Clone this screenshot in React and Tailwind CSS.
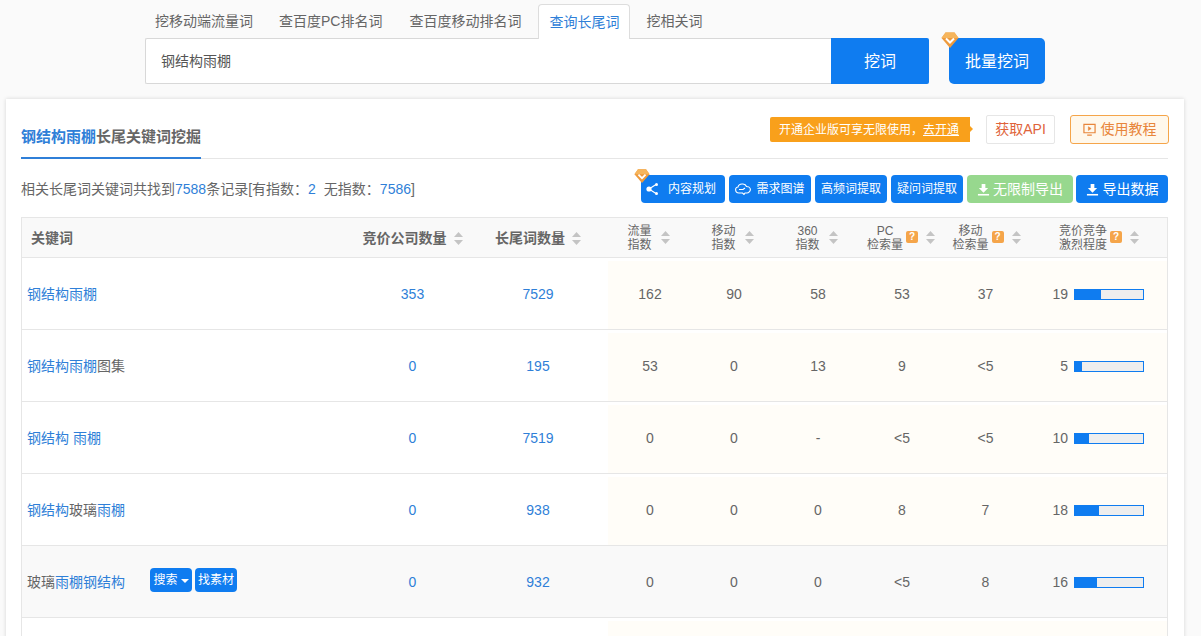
import React from "react";

const blue = "text-[#2f7fd8]";

const rows = [
  { kw: [["钢结构雨棚", 1]], a: "353", b: "7529", c: ["162", "90", "58", "53", "37"], n: 19 },
  { kw: [["钢结构雨棚", 1], ["图集", 0]], a: "0", b: "195", c: ["53", "0", "13", "9", "<5"], n: 5 },
  { kw: [["钢结构 雨棚", 1]], a: "0", b: "7519", c: ["0", "0", "-", "<5", "<5"], n: 10 },
  { kw: [["钢结构", 1], ["玻璃", 0], ["雨棚", 1]], a: "0", b: "938", c: ["0", "0", "0", "8", "7"], n: 18 },
  { kw: [["玻璃", 0], ["雨棚钢结构", 1]], a: "0", b: "932", c: ["0", "0", "0", "<5", "8"], n: 16, hover: true },
];

const Diamond = ({ className }) => (
  <svg viewBox="0 0 18 18" className={className}>
    <path d="M4.5 1.5h9L17.5 7 9 17 .5 7z" fill="#ee9a3c" />
    <path d="M4.5 1.5h9L17.5 7H.5z" fill="#f6b55c" />
    <path d="M5 7.5l4 4 4-4" fill="none" stroke="#fff" strokeWidth="2" />
  </svg>
);

const Sort = () => (
  <svg viewBox="0 0 9 13" className="h-[13px] w-[9px] shrink-0">
    <path d="M4.5 0L9 5H0z" fill="#c4c4c4" />
    <path d="M4.5 13L0 8h9z" fill="#c4c4c4" />
  </svg>
);

const Help = () => (
  <span className="flex h-[12px] w-[12px] shrink-0 items-center justify-center self-start mt-[13px] rounded-[2px] bg-[#f5a54a] text-[10px] font-bold leading-none text-white">
    ?
  </span>
);

const Download = ({ className }) => (
  <svg viewBox="0 0 14 14" className={className} fill="currentColor">
    <path d="M5 1h4v4.500h3L7 10.500 2 5.500h3z" />
    <path d="M1 11.800h12V13.500H1z" />
  </svg>
);

const TwoLine = ({ top, bottom }) => (
  <span className="mt-[1px] text-center text-[12px] leading-[14px]">
    {top}
    <br />
    {bottom}
  </span>
);

const Bar = ({ n }) => (
  <div className="flex items-center">
    <span className="w-[41px] text-right">{n}</span>
    <div className="ml-[6px] h-[11px] w-[70px] border border-[#0f7cf0] bg-[#eeeeee]">
      <div className="h-full bg-[#0f7cf0]" style={{ width: `${n * 2}%` }} />
    </div>
  </div>
);

const gridCols = "grid grid-cols-[328px_125px_133px_84px_84px_84px_84px_83px_1fr]";

const Row = ({ row }) => (
  <div className={`${gridCols} h-[72px] border-b border-[#e6e6e6] text-[14px] text-[#666] ${row.hover ? "bg-[#f9f9f9]" : ""}`}>
    <div className="flex items-center pl-[5px] pt-[2px]">
      <span className="w-[123px] whitespace-nowrap">
        {row.kw.map(([t, hl], i) => (
          <span key={i} className={hl ? blue : ""}>{t}</span>
        ))}
      </span>
      {row.hover && (
        <div className="mb-[5px] flex gap-[3px] text-[12px] text-white">
          <span className="flex h-[24px] w-[42px] items-center justify-center rounded-[4px] bg-[#0f7cf0]">
            搜索
            <span className="ml-[3px] mt-[2px] border-x-[4px] border-t-[4px] border-x-transparent border-t-white" />
          </span>
          <span className="flex h-[24px] w-[42px] items-center justify-center rounded-[4px] bg-[#0f7cf0]">找素材</span>
        </div>
      )}
    </div>
    <div className={`flex items-center justify-center pt-[2px] ${blue}`}>{row.a}</div>
    <div className={`flex items-center justify-center pr-[7px] pt-[2px] ${blue}`}>{row.b}</div>
    {row.c.map((v, i) => (
      <div key={i} className={`mt-[3px] flex items-center justify-center pb-[1px] ${row.hover ? "" : "bg-[#fffdf8]"}`}>{v}</div>
    ))}
    <div className={`mt-[3px] flex items-center pb-[1px] ${row.hover ? "" : "bg-[#fffdf8]"}`}>
      <Bar n={row.n} />
    </div>
  </div>
);

export default function App() {
  return (
    <div
      className="h-[636px] w-[1201px] overflow-hidden bg-[#fafafa] text-[14px] text-[#666]"
      style={{ fontFamily: '"Liberation Sans","Noto Sans CJK SC",sans-serif' }}
    >
      {/* tabs */}
      <div className="flex h-[38px] items-end pl-[144px] pt-[4px]">
        <div className="mr-[4px] flex h-[34px] items-center border border-transparent px-[10px] pt-[1px]">挖移动端流量词</div>
        <div className="mr-[5px] flex h-[34px] items-center border border-transparent px-[10px] pt-[1px]">查百度PC排名词</div>
        <div className="mr-[6px] flex h-[34px] items-center border border-transparent px-[10px] pt-[1px]">查百度移动排名词</div>
        <div className="relative z-10 mr-[5px] -mb-px flex h-[35px] items-center rounded-t-[4px] border border-b-0 border-[#dddddd] bg-white px-[10px] pt-[1px] text-[#2f7fd8]">查询长尾词</div>
        <div className="mr-[5px] flex h-[34px] items-center border border-transparent px-[10px] pt-[1px]">挖相关词</div>
      </div>

      {/* search */}
      <div className="flex pl-[145px]">
        <div className="flex h-[46px] w-[686px] items-center rounded-l-[2px] border border-r-0 border-[#d8d8d8] bg-white pl-[15px] text-[#555]">
          钢结构雨棚
        </div>
        <button className="h-[46px] w-[98px] rounded-r-[2px] bg-[#0f7cf0] pt-[1px] text-[16px] text-white">挖词</button>
        <button className="relative ml-[20px] h-[46px] w-[96px] rounded-[5px] bg-[#0f7cf0] pt-[1px] text-[16px] text-white">
          批量挖词
          <Diamond className="absolute -left-[8px] -top-[7px] h-[18px] w-[18px]" />
        </button>
      </div>

      {/* card */}
      <div className="ml-[6px] mt-[15px] h-[600px] w-[1178px] bg-white pl-[15px] pr-[16px] shadow-[0_0_4px_rgba(0,0,0,0.15)]">
        <div className="flex h-[60px] items-end justify-between border-b border-[#e6e6e6]">
          <div className="-mb-px h-[34px] w-[180px] whitespace-nowrap border-b-2 border-[#2f7fd8] pt-[2px] text-[15px] font-bold leading-[20px]">
            <span className={blue}>钢结构雨棚</span>长尾关键词挖掘
          </div>
          <div className="-mr-[1px] mb-[14px] flex items-center">
            <div className="relative mr-[16px] flex h-[25px] w-[200px] items-center rounded-l-[2px] bg-[#f9a01b] pl-[9px] text-[12px] text-white">
              开通企业版可享无限使用，<span className="underline">去开通</span>
              <span className="absolute -right-[3px] top-[7px] border-y-[5px] border-l-[5px] border-y-transparent border-l-[#f9a01b]" />
            </div>
            <div className="flex h-[29px] w-[69px] items-center justify-center rounded-[2px] border border-[#e6e6e6] text-[#e0633a]">获取API</div>
            <div className="ml-[15px] flex h-[29px] w-[99px] items-center justify-center gap-[5px] rounded-[3px] border border-[#f5a54a] bg-[#fff8ec] text-[#e8853a]">
              <svg viewBox="0 0 14 14" className="h-[13px] w-[13px]" fill="none" stroke="currentColor" strokeWidth="1.300">
                <path d="M1 1.500h12v9H1zM4.500 13h5" />
                <path d="M5.800 4l3 2-3 2z" fill="currentColor" strokeWidth="0.600" />
              </svg>
              使用教程
            </div>
          </div>
        </div>

        <div className="flex h-[58px] items-start justify-between pt-[16px]">
          <p className="mt-[4px] leading-[20px]">
            相关长尾词关键词共找到<span className={blue}>7588</span>条记录[有指数：<span className={blue}>2</span>
            <span className="ml-[8px]">无指数：</span>
            <span className={blue}>7586</span>]
          </p>
          <div className="flex text-white">
            <div className="relative flex h-[28px] w-[84px] items-center rounded-[4px] bg-[#0f7cf0] pl-[5px] text-[12px]">
              <Diamond className="absolute -left-[7px] -top-[7px] h-[16px] w-[16px]" />
              <svg viewBox="0 0 14 14" className="h-[14px] w-[14px]" fill="#fff">
                <path d="M3 7l7-4.500M3 7l7 4.500" stroke="#fff" strokeWidth="1.200" />
                <circle cx="3" cy="7" r="2.600" />
                <circle cx="10.500" cy="2.500" r="1.500" />
                <circle cx="10.500" cy="11.500" r="1.500" />
              </svg>
              <span className="ml-[8px]">内容规划</span>
            </div>
            <div className="ml-[4px] flex h-[28px] w-[82px] items-center justify-center gap-[5px] rounded-[4px] bg-[#0f7cf0] text-[12px]">
              <svg viewBox="0 0 16 12" className="h-[12px] w-[16px]" fill="none" stroke="#fff" strokeWidth="1.100">
                <path d="M4 10C1.500 10 .6 8 .6 6.500 .6 5 2 4 3 4c.4-2 2.500-3.300 5-3 2 .2 3 1.200 3.500 2.500 2.200 0 3.900 1.300 3.900 3S13.500 10 12 10H10l-1 1.500L7.500 10z" />
                <path d="M4 6.500h4l2-1.500" />
              </svg>
              需求图谱
            </div>
            <div className="ml-[4px] flex h-[28px] w-[72px] items-center justify-center rounded-[4px] bg-[#0f7cf0] text-[12px]">高频词提取</div>
            <div className="ml-[4px] flex h-[28px] w-[72px] items-center justify-center rounded-[4px] bg-[#0f7cf0] text-[12px]">疑问词提取</div>
            <div className="ml-[4px] flex h-[28px] w-[106px] items-center justify-center gap-[3px] rounded-[4px] bg-[#97d88e]">
              <Download className="h-[13px] w-[13px]" />
              无限制导出
            </div>
            <div className="ml-[3px] flex h-[28px] w-[92px] items-center justify-center gap-[4px] rounded-[4px] bg-[#0f7cf0]">
              <Download className="h-[13px] w-[13px]" />
              导出数据
            </div>
          </div>
        </div>

        {/* table */}
        <div className="border-x border-t border-[#e6e6e6]">
          <div className={`${gridCols} h-[40px] border-b border-[#e6e6e6] bg-[#f9f9f9]`}>
            <div className="flex items-center pl-[9px] pt-[1px] font-bold">关键词</div>
            <div className="flex items-center justify-center gap-[7px] pt-[1px] font-bold">
              竞价公司数量<Sort />
            </div>
            <div className="flex items-center justify-center gap-[7px] pr-[7px] pt-[1px] font-bold">
              长尾词数量<Sort />
            </div>
            {[["流量", "指数"], ["移动", "指数"], ["360", "指数"]].map(([a, b]) => (
              <div key={a} className="flex items-center justify-center gap-[9px] pr-[3px]">
                <TwoLine top={a} bottom={b} />
                <Sort />
              </div>
            ))}
            <div className="flex items-center justify-center gap-[3px] pr-[2px]">
              <TwoLine top="PC" bottom="检索量" />
              <Help />
              <span className="ml-[5px]"><Sort /></span>
            </div>
            <div className="flex items-center justify-center gap-[3px] pl-[2px]">
              <TwoLine top="移动" bottom="检索量" />
              <Help />
              <span className="ml-[5px]"><Sort /></span>
            </div>
            <div className="flex items-center gap-[3px] pl-[32px]">
              <TwoLine top="竞价竞争" bottom="激烈程度" />
              <Help />
              <span className="ml-[5px]"><Sort /></span>
            </div>
          </div>
          {rows.map((row) => (
            <Row key={row.kw.map((k) => k[0]).join("")} row={row} />
          ))}
          <div className={`${gridCols} h-[72px]`}>
            <div className="col-span-3" />
            <div className="col-span-6 mt-[3px] bg-[#fffdf8]" />
          </div>
        </div>
      </div>
    </div>
  );
}
